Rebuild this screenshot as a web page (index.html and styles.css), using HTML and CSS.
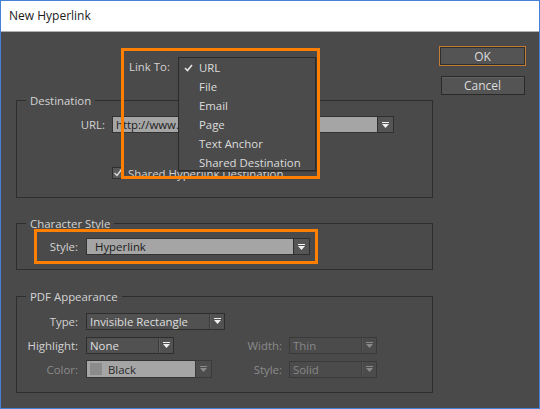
FILE: index.html
```html
<!DOCTYPE html>
<html lang="en">
<head>
<meta charset="utf-8">
<title>New Hyperlink</title>
<link rel="stylesheet" href="styles.css">
</head>
<body>
<div class="window">
  <div class="titlebar">New Hyperlink</div>
  <div class="content">
    <div class="main">
      <div class="linkrow">
        <span class="lbl-link">Link To:</span>
        <div class="linkselect">
          <ul class="menu">
            <li class="checked"><svg class="check" width="9" height="8" viewBox="0 0 9 8"><polyline points="1,4 3.5,6.5 8,1" fill="none" stroke="#e6e6e6" stroke-width="1.6"/></svg>URL</li>
            <li>File</li>
            <li>Email</li>
            <li>Page</li>
            <li>Text Anchor</li>
            <li>Shared Destination</li>
          </ul>
        </div>
      </div>

      <fieldset class="group group-dest">
        <legend>Destination</legend>
        <div class="dest-body">
          <div class="row">
            <span class="lbl lbl-url">URL:</span>
            <div class="combo combo-url">
              <span class="field">http://www.adobe.com</span>
              <span class="arrowbox"><svg width="7" height="6" viewBox="0 0 7 6"><rect x="0" y="0" width="7" height="1" fill="#f2f2f2"/><polygon points="0,2 7,2 3.5,6" fill="#f2f2f2"/></svg></span>
            </div>
          </div>
          <div class="checkrow">
            <span class="checkbox"><svg width="10" height="10" viewBox="0 0 10 10"><polyline points="1.5,5 4,7.5 8.5,1.5" fill="none" stroke="#dcdcdc" stroke-width="1.4"/></svg></span>
            <span class="checktext">Shared Hyperlink Destination</span>
          </div>
        </div>
      </fieldset>

      <fieldset class="group group-char">
        <legend>Character Style</legend>
        <div class="char-body">
          <div class="row">
            <span class="lbl lbl-style">Style:</span>
            <div class="combo combo-style">
              <span class="field">Hyperlink</span>
              <span class="arrowbox"><svg width="7" height="6" viewBox="0 0 7 6"><rect x="0" y="0" width="7" height="1" fill="#f2f2f2"/><polygon points="0,2 7,2 3.5,6" fill="#f2f2f2"/></svg></span>
            </div>
          </div>
        </div>
      </fieldset>

      <fieldset class="group group-pdf">
        <legend>PDF Appearance</legend>
        <div class="pdf-body">
          <span class="plbl first">Type:</span>
          <div class="dd dd-type"><span class="val">Invisible Rectangle</span><span class="arr"><svg width="7" height="6" viewBox="0 0 7 6"><rect x="0" y="0" width="7" height="1" fill="#f0f0f0"/><polygon points="0,2 7,2 3.5,6" fill="#f0f0f0"/></svg></span></div>

          <span class="plbl first">Highlight:</span>
          <div class="dd dd-high"><span class="val">None</span><span class="arr"><svg width="7" height="6" viewBox="0 0 7 6"><rect x="0" y="0" width="7" height="1" fill="#f0f0f0"/><polygon points="0,2 7,2 3.5,6" fill="#f0f0f0"/></svg></span></div>
          <span class="plbl plbl2 off">Width:</span>
          <div class="dd dd-small off"><span class="val">Thin</span><span class="arr"><svg width="7" height="6" viewBox="0 0 7 6"><rect x="0" y="0" width="7" height="1" fill="#8a8a8a"/><polygon points="0,2 7,2 3.5,6" fill="#8a8a8a"/></svg></span></div>

          <span class="plbl first off">Color:</span>
          <div class="combo combo-color"><span class="field"><span class="swatch"></span>Black</span><span class="arrowbox off"><svg width="7" height="6" viewBox="0 0 7 6"><rect x="0" y="0" width="7" height="1" fill="#8a8a8a"/><polygon points="0,2 7,2 3.5,6" fill="#8a8a8a"/></svg></span></div>
          <span class="plbl plbl2 off">Style:</span>
          <div class="dd dd-small off"><span class="val">Solid</span><span class="arr"><svg width="7" height="6" viewBox="0 0 7 6"><rect x="0" y="0" width="7" height="1" fill="#8a8a8a"/><polygon points="0,2 7,2 3.5,6" fill="#8a8a8a"/></svg></span></div>
        </div>
      </fieldset>
    </div>

    <div class="buttons">
      <button class="btn btn-ok">OK</button>
      <button class="btn btn-cancel">Cancel</button>
    </div>

    <div class="callout callout-link"></div>
    <div class="callout callout-style"></div>
  </div>
</div>
</body>
</html>
```

FILE: styles.css
```css
* { box-sizing: border-box; }
html, body { margin: 0; padding: 0; }
body {
  width: 540px;
  height: 409px;
  overflow: hidden;
  background: #ffffff;
  font-family: "Open Sans", "Noto Sans", "Liberation Sans", sans-serif;
  font-size: 11.4px;
  color: #d2d2d2;
}

.window {
  width: 540px;
  height: 409px;
  border: 1px solid #4380d6;
  display: flex;
  flex-direction: column;
}

.titlebar {
  flex: none;
  height: 31px;
  background: #ffffff;
  border-bottom: 1px solid #b0b0b0;
  color: #1b1b1b;
  font-size: 12px;
  line-height: 30px;
  padding-left: 8px;
}

.content {
  flex: 1;
  position: relative;
  background: #4a4a4a;
  display: grid;
  grid-template-columns: 417px 87px;
  column-gap: 6px;
  padding: 0 13px 0 15px;
}

.main { padding-top: 25px; }

/* Link To row */
.linkrow {
  display: flex;
  align-items: center;
  height: 19px;
  padding-left: 113px;
}
.lbl-link { width: 49px; white-space: nowrap; }
.linkselect {
  position: relative;
  width: 138px;
  height: 19px;
}
.menu {
  position: absolute;
  left: 0;
  top: 0;
  z-index: 2;
  width: 138px;
  height: 114px;
  margin: 0;
  padding: 0;
  list-style: none;
  background: #4b4b4b;
  border: 1px solid #2a2a2a;
  box-shadow: 1px 1px 0 #3a3a3a;
  color: #dcdcdc;
}
.menu li {
  height: 19px;
  line-height: 19px;
  padding-left: 20px;
  white-space: nowrap;
}
.menu .check {
  margin-left: -15px;
  margin-right: 6px;
  vertical-align: 0;
}

/* groups */
.group {
  margin: 0;
  padding: 0;
  min-width: 0;
  border: 1px solid #2e2e2e;
}
.group legend {
  margin-left: 9px;
  padding: 0 4px;
  height: 17px;
  line-height: 17px;
  color: #d4d4d4;
}
.group-dest { margin-top: 16px; }
.group-char { margin-top: 17px; }
.group-pdf { margin-top: 18px; }

.dest-body { padding: 7px 0 17px 0; }
.char-body { padding: 6px 0 14px 0; }

.row {
  display: flex;
  align-items: center;
  height: 17px;
}
.lbl { text-align: right; white-space: nowrap; }
.lbl-url { width: 88px; margin-right: 7px; }
.lbl-style { width: 61px; margin-right: 8px; }

.combo {
  display: flex;
  height: 17px;
}
.combo .field {
  flex: 1;
  display: flex;
  align-items: center;
  background: #a5a5a5;
  color: #1c1c1c;
  border: 1px solid #333333;
  border-right: none;
  padding-left: 3px;
  white-space: nowrap;
  overflow: hidden;
}
.combo .arrowbox {
  flex: none;
  width: 17px;
  display: flex;
  align-items: center;
  justify-content: center;
  background: #555555;
  border: 1px solid #2f2f2f;
}
.combo .arrowbox.off { background: #4d4d4d; border-color: #3a3a3a; }
.combo-url { width: 282px; }
.combo-style { width: 224px; }
.combo-style .field { padding-left: 8px; }

.checkrow {
  display: flex;
  align-items: center;
  height: 14px;
  margin-top: 33px;
  padding-left: 95px;
}
.checkbox {
  width: 12px;
  height: 12px;
  display: flex;
  align-items: center;
  justify-content: center;
  background: #595959;
  border: 1px solid #2f2f2f;
}
.checktext { margin-left: 4px; white-space: nowrap; }

/* PDF appearance grid */
.pdf-body {
  display: grid;
  grid-template-columns: 69px 126px 77px 88px;
  grid-auto-rows: 18px;
  row-gap: 6px;
  align-items: center;
  padding: 7px 0 14px 0;
}
.plbl {
  text-align: right;
  padding-right: 8px;
  white-space: nowrap;
}
.plbl.first { grid-column: 1; }
.plbl2 { padding-right: 7px; }
.off { color: #8a8a8a; }

.dd {
  display: flex;
  height: 17px;
  background: #515151;
  border: 1px solid #2e2e2e;
  color: #dedede;
}
.dd .val {
  flex: 1;
  display: flex;
  align-items: center;
  padding-left: 3px;
  white-space: nowrap;
  overflow: hidden;
}
.dd .arr {
  flex: none;
  width: 15px;
  display: flex;
  align-items: center;
  justify-content: center;
  border-left: 1px solid #3b3b3b;
  box-shadow: inset 1px 0 0 #5e5e5e;
}
.dd.off { background: #4b4b4b; border-color: #3a3a3a; color: #888888; }
.dd.off .arr { border-left-color: #404040; box-shadow: inset 1px 0 0 #535353; }
.dd-type { grid-column: 2 / 4; width: 139px; }
.dd-high { grid-column: 2; width: 88px; }
.dd-small { width: 88px; }

.combo-color { width: 126px; height: 18px; }
.combo-color .field { color: #2a2a2a; }
.swatch {
  width: 12px;
  height: 12px;
  background: #8b8b8b;
  margin-right: 6px;
  flex: none;
}

/* buttons */
.buttons {
  padding-top: 14px;
  display: flex;
  flex-direction: column;
  align-items: center;
}
.btn {
  font-family: inherit;
  font-size: 12px;
  color: #dcdcdc;
  background: #545454;
  border: 1px solid #2a2a2a;
  padding: 0;
  box-shadow: inset 0 1px 0 #5f5f5f;
}
.btn-ok {
  width: 87px;
  height: 20px;
  border-color: #c47b33;
  box-shadow: inset 0 0 0 1px #2e2e2e;
}
.btn-cancel {
  width: 84px;
  height: 19px;
  margin-top: 10px;
}

/* annotation callouts */
.callout {
  position: absolute;
  z-index: 3;
  border: 3px solid #ff8000;
  pointer-events: none;
}
.callout-link { left: 120px; top: 16px; width: 199px; height: 131px; }
.callout-style { left: 33px; top: 197px; width: 284px; height: 35px; }
```
